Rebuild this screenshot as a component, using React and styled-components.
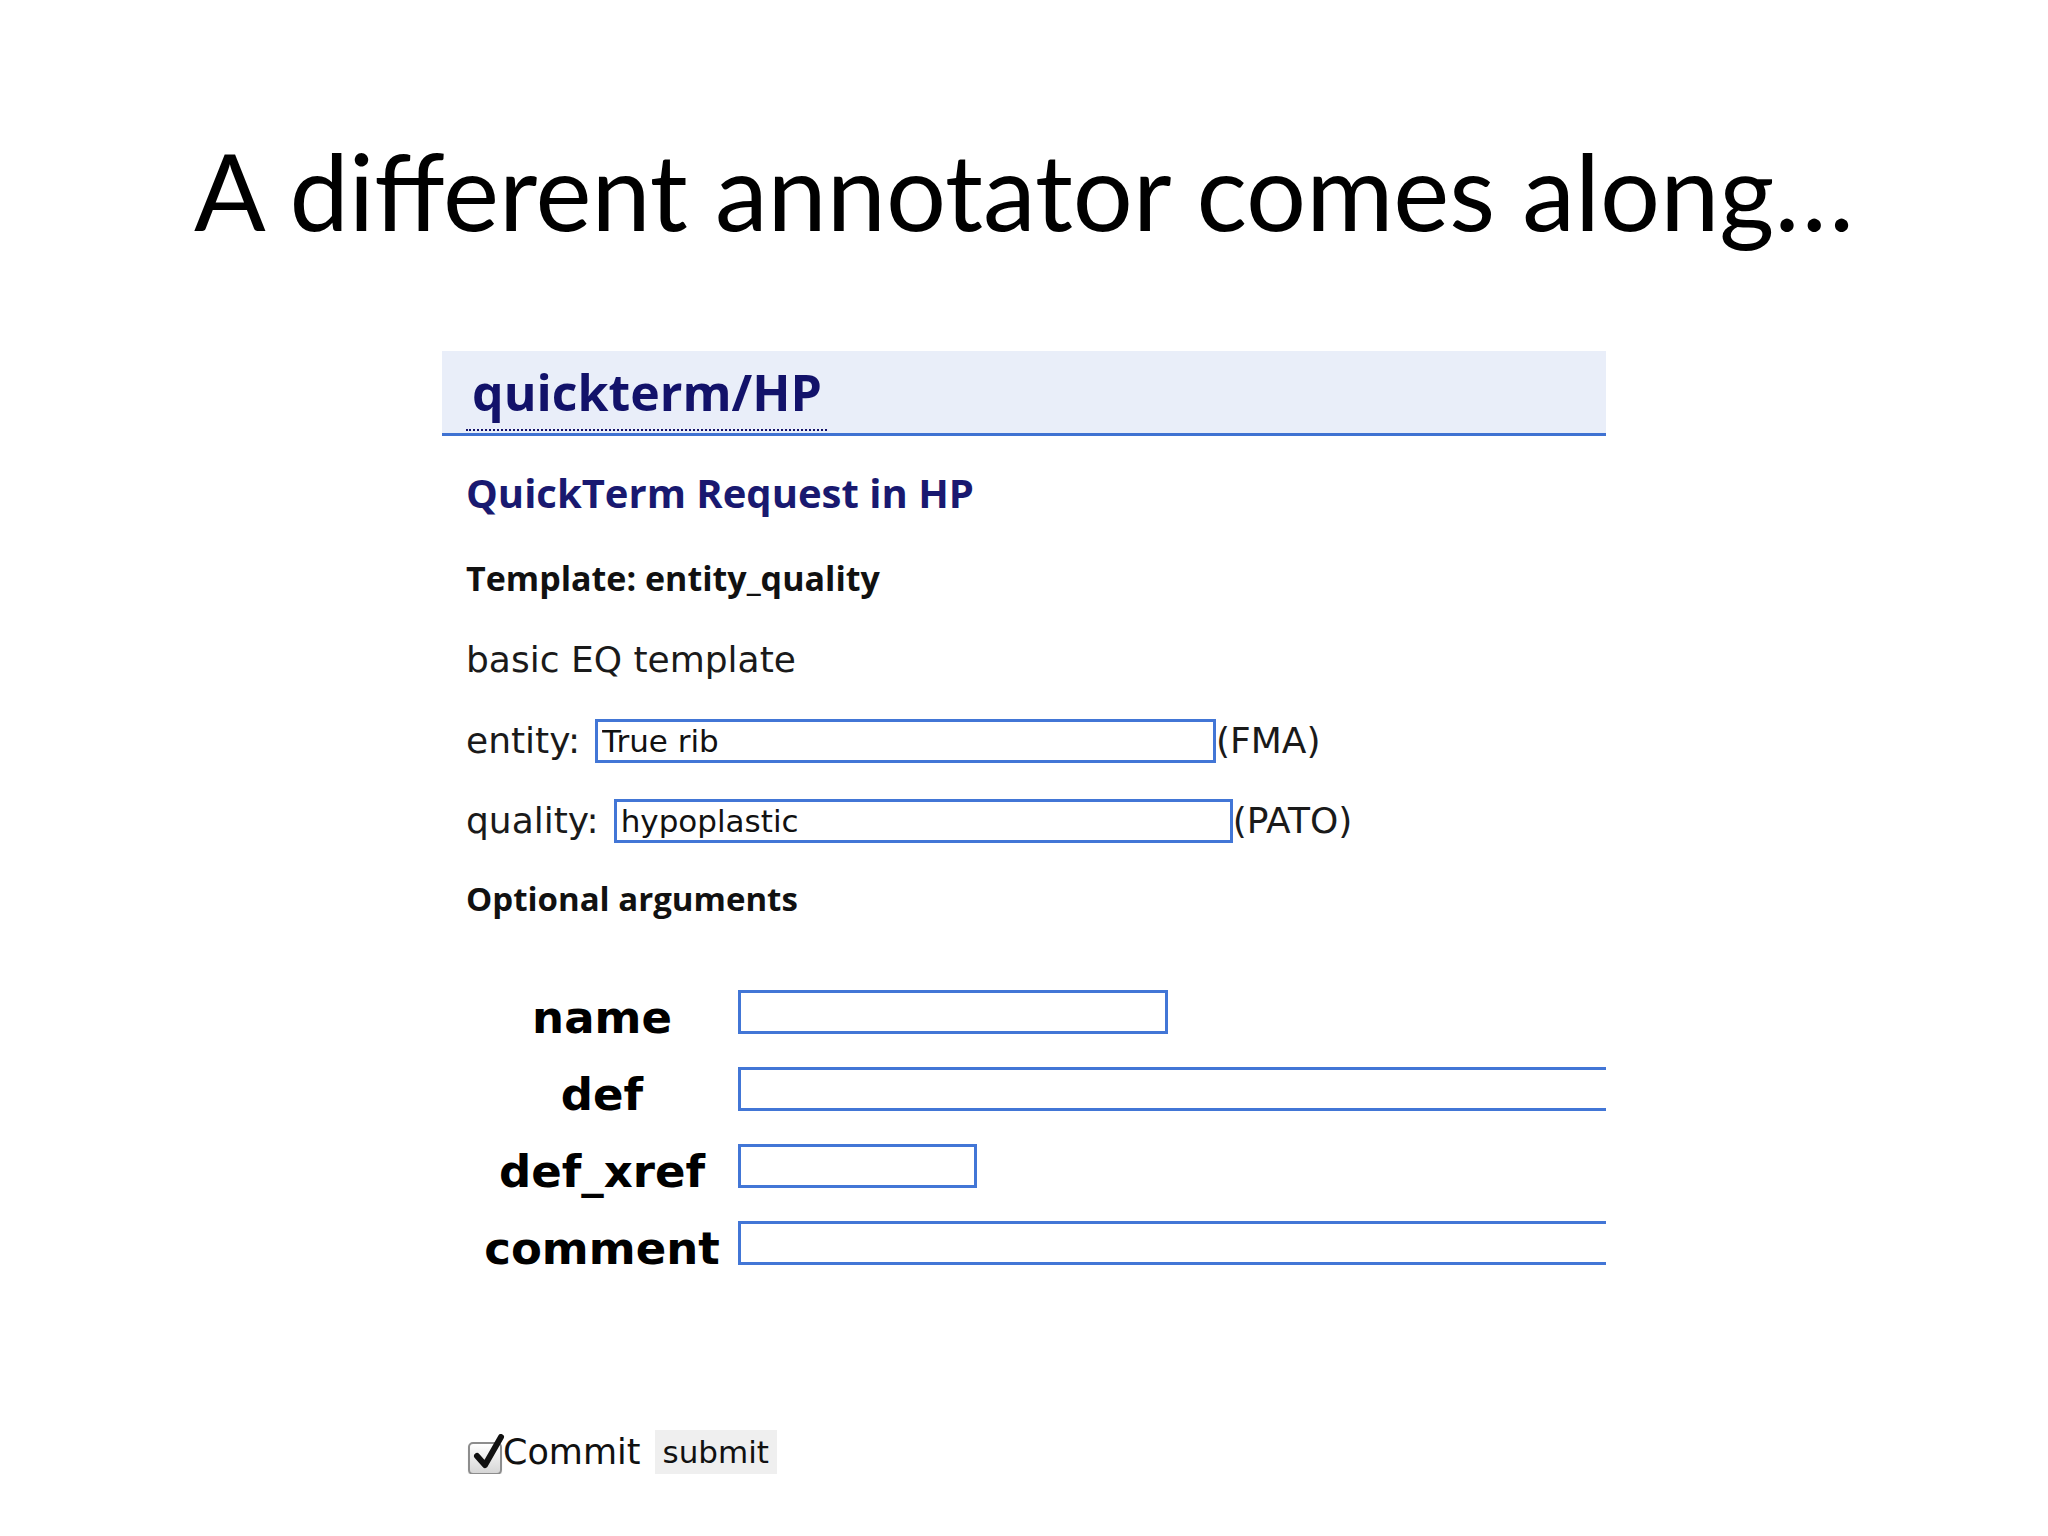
import styled, { createGlobalStyle } from 'styled-components'

const GlobalStyle = createGlobalStyle`
  html, body {
    margin: 0;
    padding: 0;
    background: #ffffff;
  }
  body {
    font-family: "DejaVu Sans", Verdana, sans-serif;
    color: #111;
  }
`

const Slide = styled.div`
  width: 2048px;
  height: 1536px;
  overflow: hidden;
  background: #ffffff;
`

const Title = styled.h1`
  margin: 120px 0 0;
  font-family: Lato, "Open Sans", sans-serif;
  font-weight: 400;
  font-size: 106px;
  line-height: 140px;
  text-align: center;
  color: #000;
`

const Panel = styled.section`
  margin: 91px 0 0 442px;
  width: 1164px;
  overflow: hidden;
`

const Header = styled.div`
  background: #e9eef9;
  padding: 13px 22px 2px 24px;
  border-bottom: 3px solid #3f72d2;
`

const HeaderLink = styled.span`
  display: inline-block;
  font-family: "Open Sans", sans-serif;
  font-weight: 700;
  font-size: 50px;
  line-height: 56px;
  padding: 0 5px 9px 6px;
  color: #12126a;
  border-bottom: 2px dotted #12126a;
`

const Body = styled.div`
  padding-left: 24px;
`

const Heading = styled.div`
  margin-top: ${p => p.$top}px;
  font-family: "Open Sans", sans-serif;
  font-weight: 700;
  font-size: ${p => p.$size}px;
  line-height: 44px;
  color: ${p => p.$navy ? '#191970' : '#111'};
`

const Text = styled.div`
  margin-top: ${p => p.$top}px;
  font-size: 36px;
  line-height: 44px;
  color: #1a1a1a;
`

const FieldRow = styled.div`
  display: flex;
  align-items: center;
  margin-top: ${p => p.$top}px;
  height: 44px;
`

const FieldLabel = styled.span`
  font-size: 36px;
  line-height: 44px;
  margin-right: 15px;
  color: #1a1a1a;
`

const Input = styled.input`
  box-sizing: border-box;
  width: ${p => p.$width}px;
  height: 44px;
  flex: none;
  margin: 0;
  padding: 0 4px;
  border: 3px solid #4276d6;
  border-radius: 0;
  background: #fff;
  font-family: "DejaVu Sans", Verdana, sans-serif;
  font-size: 31px;
  color: #111;
  outline: none;
`

const Source = styled.span`
  font-size: 36px;
  line-height: 44px;
  color: #1a1a1a;
`

const ArgsGrid = styled.div`
  display: grid;
  grid-template-columns: 272px auto;
  grid-auto-rows: 44px;
  row-gap: 33px;
  margin-top: 69px;
`

const ArgLabel = styled.div`
  height: 44px;
  line-height: 56px;
  text-align: center;
  font-family: "DejaVu Sans", Verdana, sans-serif;
  font-weight: 700;
  font-size: 45px;
  color: #000;
`

const CommitRow = styled.div`
  display: flex;
  align-items: center;
  height: 44px;
  margin-top: 165px;
  padding-left: 2px;
`

const CheckBox = styled.span`
  position: relative;
  box-sizing: border-box;
  width: 34px;
  height: 33px;
  margin-top: 12px;
  border: 2px solid #8d8d8d;
  border-radius: 5px;
  background: linear-gradient(#ffffff, #d6d6d6);
  box-shadow: 0 1px 1px rgba(0, 0, 0, 0.2);

  svg {
    position: absolute;
    left: 3px;
    top: -10px;
  }
`

const CommitText = styled.span`
  font-size: 35px;
  line-height: 44px;
  color: #111;
  margin-left: 1px;
`

const SubmitButton = styled.button`
  height: 44px;
  margin-left: 14px;
  padding: 0 8px;
  border: none;
  background: #efefef;
  font-family: "DejaVu Sans", Verdana, sans-serif;
  font-size: 31px;
  color: #111;
`

const args = [
  { label: 'name', width: 430 },
  { label: 'def', width: 1000 },
  { label: 'def_xref', width: 239 },
  { label: 'comment', width: 1000 },
]

export default function App() {
  return (
    <Slide>
      <GlobalStyle />
      <Title>A different annotator comes along…</Title>
      <Panel>
        <Header>
          <HeaderLink>quickterm/HP</HeaderLink>
        </Header>
        <Body>
          <Heading $top={35} $size={40} $navy>QuickTerm Request in HP</Heading>
          <Heading $top={41} $size={34}>Template: entity_quality</Heading>
          <Text $top={38}>basic EQ template</Text>
          <FieldRow $top={37}>
            <FieldLabel>entity:</FieldLabel>
            <Input $width={621} defaultValue="True rib" />
            <Source>(FMA)</Source>
          </FieldRow>
          <FieldRow $top={36}>
            <FieldLabel>quality:</FieldLabel>
            <Input $width={619} defaultValue="hypoplastic" />
            <Source>(PATO)</Source>
          </FieldRow>
          <Heading $top={34} $size={33}>Optional arguments</Heading>
          <ArgsGrid>
            {args.map(a => (
              <>
                <ArgLabel key={a.label + '-l'}>{a.label}</ArgLabel>
                <Input key={a.label + '-i'} $width={a.width} />
              </>
            ))}
          </ArgsGrid>
          <CommitRow>
            <CheckBox>
              <svg width="34" height="38" viewBox="0 0 34 38">
                <path d="M4 22 L12 31 L28 3" fill="none" stroke="#111" strokeWidth="6" strokeLinecap="round" strokeLinejoin="round" />
              </svg>
            </CheckBox>
            <CommitText>Commit</CommitText>
            <SubmitButton>submit</SubmitButton>
          </CommitRow>
        </Body>
      </Panel>
    </Slide>
  )
}
